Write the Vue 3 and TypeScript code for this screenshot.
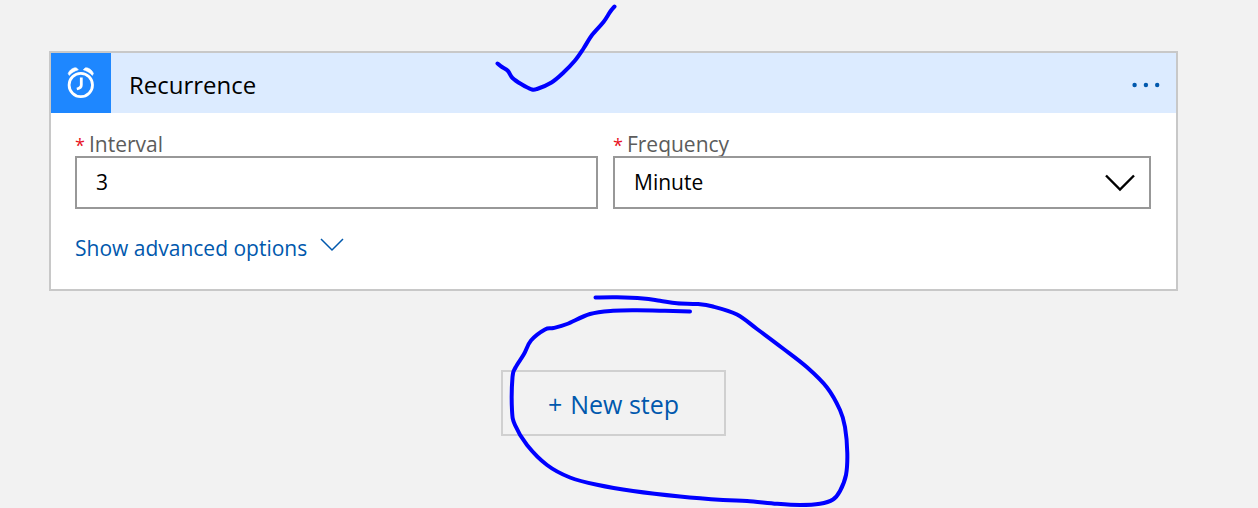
<script setup lang="ts">
import { ref } from 'vue'

type Point = [number, number]

const interval = ref('3')
const frequency = ref('Minute')
const frequencies: string[] = ['Second', 'Minute', 'Hour', 'Day', 'Week', 'Month']

// Pen strokes, sampled in order and joined by a smooth curve
const tick: Point[] = [
  [497.5, 63.5], [502, 67], [508, 71], [512.5, 78], [521.5, 84.300], [531.5, 89.300], [537, 89], [551.5, 82.5],
  [563.5, 72.5], [575, 60.5], [583.5, 48.5], [592, 35], [603.5, 22], [610, 12], [614.5, 6.5],
]
const loop: Point[] = [
  [595.5, 297.5], [617, 297.300], [643, 298.5], [660, 300.800], [677, 303.300], [697, 304], [713, 306.5],
  [737, 314.5], [757, 329], [783, 348.5], [807, 367.300], [827, 387.5], [840, 410], [845, 427], [847.300, 453],
  [846, 475], [840, 491], [833, 499.5], [820, 503.800], [800, 505], [777, 503.800], [747, 501], [723, 500],
  [680, 496.5], [633, 491], [597, 484.800], [570, 477.5], [547, 465], [527, 445], [515, 425], [512, 410],
  [512.5, 377], [515.5, 367.5], [524, 354], [531, 340.5], [545, 329.5], [553.5, 328], [567, 324], [590, 314],
  [613, 310.800], [637, 310.300], [665, 310.800], [690, 311.5],
]

function smooth(points: Point[]): string {
  let d = `M${points[0][0]} ${points[0][1]}`
  for (let i = 0; i < points.length - 1; i++) {
    const a = points[Math.max(i - 1, 0)]
    const b = points[i]
    const c = points[i + 1]
    const e = points[Math.min(i + 2, points.length - 1)]
    d += `C${b[0] + (c[0] - a[0]) / 6} ${b[1] + (c[1] - a[1]) / 6} ${c[0] - (e[0] - b[0]) / 6} ${c[1] - (e[1] - b[1]) / 6} ${c[0]} ${c[1]}`
  }
  return d
}

const strokes: string[] = [tick, loop].map(smooth)
</script>

<template>
  <main class="designer">
    <section class="card">
      <header class="card-header">
        <div class="badge">
          <svg width="60" height="60" viewBox="0 0 60 60" fill="none" stroke="#fff" aria-hidden="true">
            <circle cx="29.8" cy="32" r="11.700" stroke-width="2.800" />
            <path d="M30.300 24.500v7.500q0 3-4.500 4" stroke-width="2.800" />
            <path d="M17.200 20.500C18.500 17 22 14.400 25.500 14.900L27.300 16.800C23.800 17.800 20.800 19.600 18.200 22.400Z" fill="#fff" stroke-width="0.600" stroke-linejoin="round" />
            <path d="M42.400 20.500C41.100 17 37.600 14.400 34.100 14.900L32.300 16.800C35.800 17.800 38.800 19.600 41.400 22.400Z" fill="#fff" stroke-width="0.600" stroke-linejoin="round" />
          </svg>
        </div>
        <h1 class="title">Recurrence</h1>
        <button class="more" type="button" aria-label="More options">
          <svg width="28" height="6" viewBox="0 0 28 6" fill="#0058ad" aria-hidden="true">
            <circle cx="2.600" cy="3" r="2.200" />
            <circle cx="13.900" cy="3" r="2.200" />
            <circle cx="25.200" cy="3" r="2.200" />
          </svg>
        </button>
      </header>
      <div class="card-body">
        <div class="fields">
          <div class="field">
            <label for="interval"><span class="required">*</span>Interval</label>
            <input id="interval" v-model="interval" class="control" type="text" />
          </div>
          <div class="field">
            <label for="frequency"><span class="required">*</span>Frequency</label>
            <div class="select-wrap">
              <select id="frequency" v-model="frequency" class="control">
                <option v-for="item in frequencies" :key="item">{{ item }}</option>
              </select>
              <svg class="caret" width="30" height="18" viewBox="0 0 30 18" fill="none" stroke="#000" stroke-width="2.400" aria-hidden="true">
                <path d="M1 1.500l14 14L29 1.500" />
              </svg>
            </div>
          </div>
        </div>
        <button class="advanced" type="button">
          Show advanced options
          <svg width="24" height="14" viewBox="0 0 24 14" fill="none" stroke="#0058ad" stroke-width="1.500" aria-hidden="true">
            <path d="M1 1l11 11L23 1" />
          </svg>
        </button>
      </div>
    </section>
    <button class="new-step" type="button"><span>+</span>New step</button>
    <svg class="ink" width="1258" height="508" viewBox="0 0 1258 508" aria-hidden="true">
      <path v-for="(d, i) in strokes" :key="i" :d="d" />
    </svg>
  </main>
</template>

<style>
body {
  margin: 0;
  background: #f2f2f2;
}
</style>

<style scoped>
.designer {
  position: relative;
  box-sizing: border-box;
  min-height: 100vh;
  padding: 51px 80px 0 49px;
  overflow: hidden;
  background: #f2f2f2;
  font-family: "Open Sans", "Noto Sans", sans-serif;
  font-size: 21px;
  color: #000;
}
button {
  margin: 0;
  border: 0;
  background: none;
  font: inherit;
  color: #0058ad;
  cursor: pointer;
}
.card {
  border: 2px solid #c8c8c8;
  background: #fff;
}
.card-header {
  display: flex;
  align-items: center;
  height: 60px;
  background: #dcebff;
}
.badge {
  width: 60px;
  height: 60px;
  background: #1e87ff;
}
.title {
  flex: 1;
  margin: 0 0 0 18px;
  padding-top: 4px;
  font-size: 24px;
  font-weight: 400;
  line-height: 32px;
}
.more {
  display: flex;
  padding: 12px 16px 8px;
}
.card-body {
  padding: 16px 25px 26px 24px;
}
.fields {
  display: grid;
  grid-template-columns: 523fr 538fr;
  gap: 15px;
}
.field label {
  display: block;
  height: 27px;
  line-height: 30px;
  color: #5c5c5c;
}
.required {
  margin-right: 4px;
  font-size: 18px;
  color: #e81123;
}
.control {
  display: block;
  box-sizing: border-box;
  width: 100%;
  height: 53px;
  margin: 0;
  padding: 0 19px 2px;
  border: 2px solid #989898;
  border-radius: 0;
  outline: 0;
  background: #fff;
  font: inherit;
  color: #000;
  appearance: none;
}
.select-wrap {
  position: relative;
}
.caret {
  position: absolute;
  top: 18px;
  right: 16px;
  pointer-events: none;
}
.advanced {
  display: flex;
  align-items: center;
  gap: 13px;
  margin-top: 24px;
  padding: 0;
  line-height: 30px;
}
.advanced svg {
  margin-bottom: 6px;
}
.new-step {
  display: flex;
  align-items: center;
  justify-content: center;
  gap: 8px;
  width: 225px;
  height: 66px;
  margin: 79px auto 0;
  padding: 2px 0 0;
  border: 2px solid #d0d0d0;
  font-size: 25px;
}
.ink {
  position: absolute;
  top: 0;
  left: calc(50% - 629px);
  fill: none;
  stroke: #0000ff;
  stroke-width: 4;
  stroke-linecap: round;
  stroke-linejoin: round;
  pointer-events: none;
}
</style>
